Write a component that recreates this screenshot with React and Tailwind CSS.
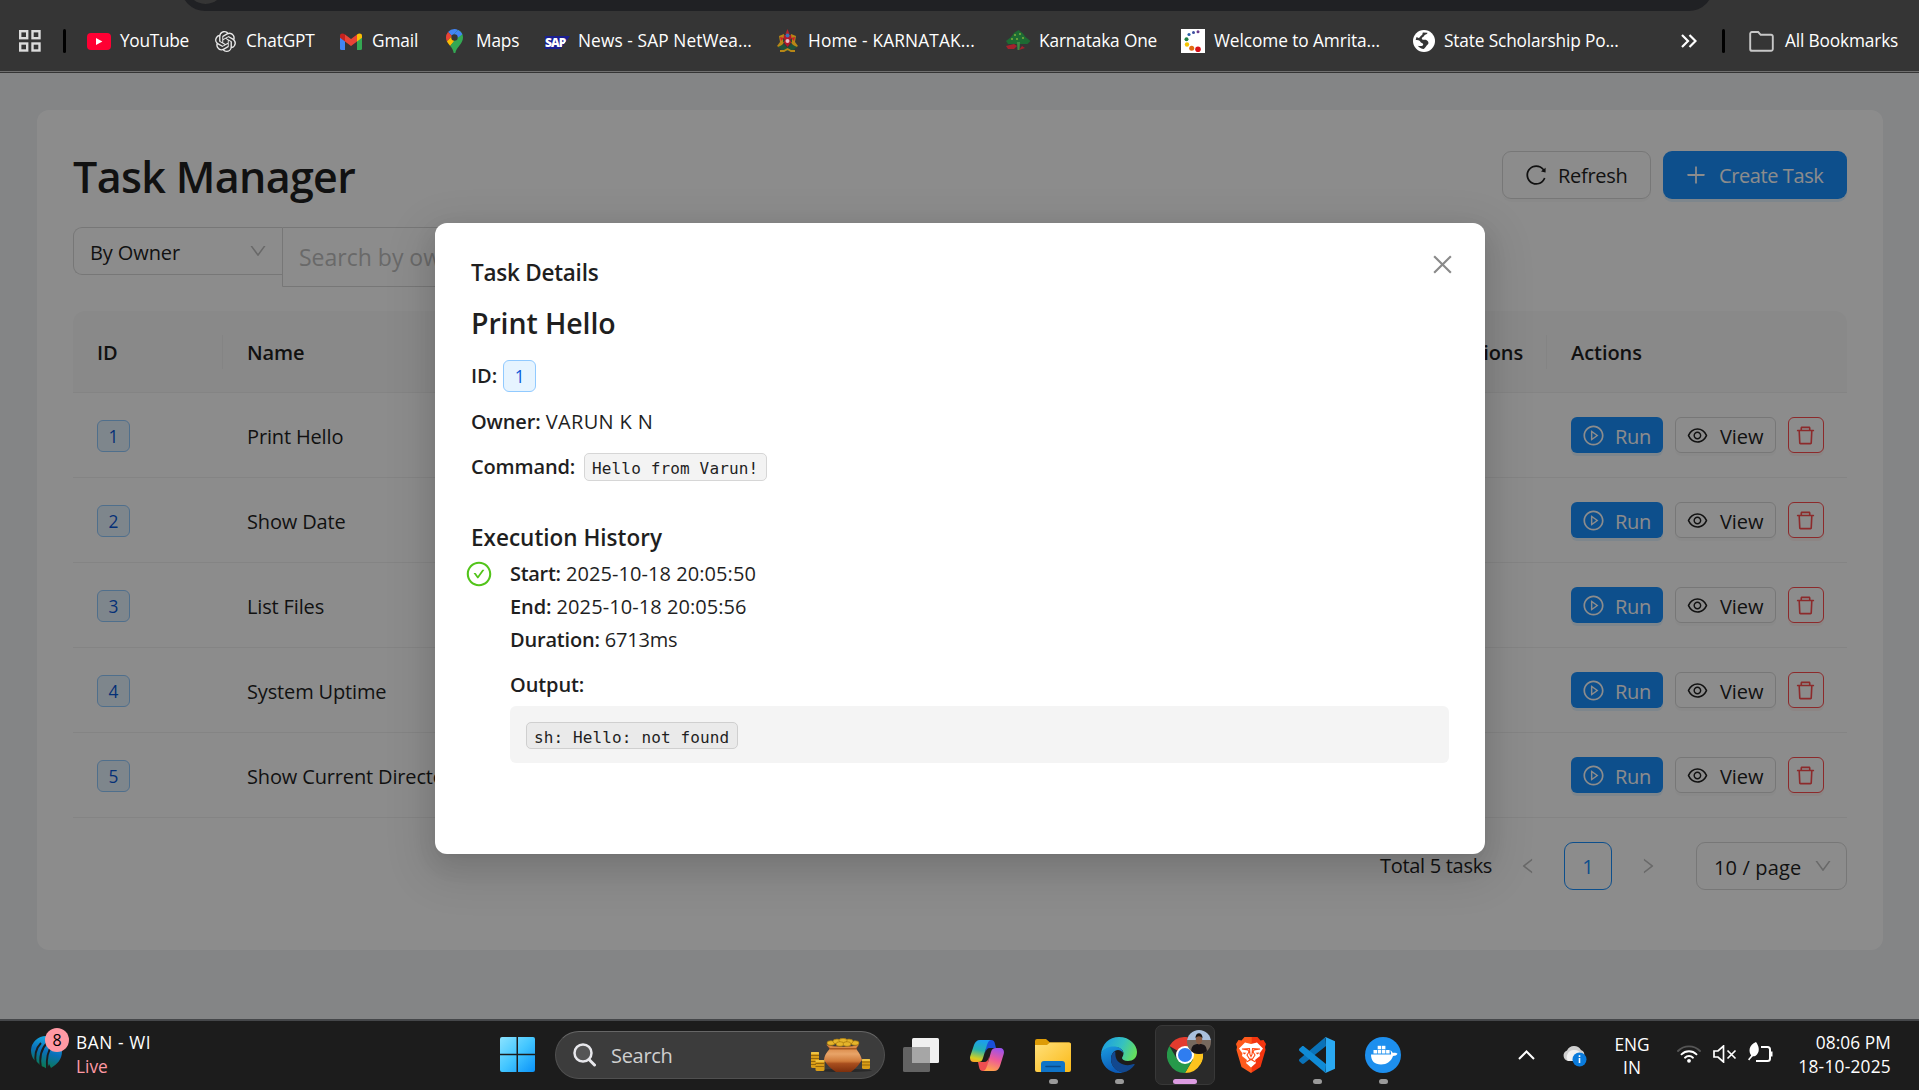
import {
  AiOutlineReload,
  AiOutlinePlus,
  AiOutlineDown,
  AiOutlineLeft,
  AiOutlineRight,
  AiOutlinePlayCircle,
  AiOutlineEye,
  AiOutlineDelete,
  AiOutlineClose,
  AiOutlineCheckCircle,
} from "react-icons/ai";
import { SiOpenai } from "react-icons/si";

/* ---------- bookmark icons ---------- */

const YouTubeIcon = () => (
  <svg width="24" height="17" viewBox="0 0 24 17">
    <rect width="24" height="17" rx="4" fill="#ff0033" />
    <path d="M9 5v7l6.400-3.500z" fill="#fff" />
  </svg>
);
const GmailIcon = () => (
  <svg width="22" height="17" viewBox="0 0 22 17">
    <path d="M0 3v12.500A1.500 1.500 0 0 0 1.500 17H5V7z" fill="#4285f4" />
    <path d="M22 3v12.500a1.500 1.500 0 0 1-1.500 1.500H17V7z" fill="#34a853" />
    <path d="M5 1.500v7L11 13l6-4.500v-7L11 6z" fill="#ea4335" />
    <path d="M0 2.500v2.200L5 8.500v-7C3-.3 0 .2 0 2.500z" fill="#c5221f" />
    <path d="M22 2.500v2.200L17 8.500v-7c2-1.800 5-1.300 5 1z" fill="#fbbc04" />
  </svg>
);
const MapsIcon = () => (
  <svg width="17" height="24" viewBox="0 0 17 24">
    <path d="M8.500 0A8.500 8.500 0 0 0 2 3l4 4 6-6A8 8 0 0 0 8.500 0z" fill="#4285f4" />
    <path d="M2 3a8.500 8.500 0 0 0-2 5.500c0 1.500.3 2.700.9 3.900L6 7z" fill="#ea4335" />
    <path d="M6 7 .9 12.400C1.700 14 3 15.400 4.200 17L12 8z" fill="#fbbc04" />
    <path d="M12 1 6 7l2 5-3.800 5C6 19.200 7.200 21 7.700 24h1.600c1-6 7.700-9 7.700-15.500C17 5 15 2 12 1z" fill="#34a853" />
    <path d="M12 1 7 6l3 4 6.400-4.800A8.500 8.500 0 0 0 12 1z" fill="#4285f4" />
    <circle cx="8.500" cy="8.500" r="3.200" fill="#353535" />
  </svg>
);
const SapIcon = () => (
  <span className="ml-px mt-[3px] flex h-[13px] w-[25px] items-center bg-[#1b1f92] [clip-path:polygon(0_0,100%_0,62%_100%,0_100%)]">
    <span className="text-[12px] font-extrabold leading-none tracking-[-1px] text-white">SAP</span>
  </span>
);
const EmblemIcon = () => (
  <svg width="23" height="24" viewBox="0 0 23 24">
    <path d="M11.500 0l2 5h-4z" fill="#b3202a" />
    <path d="M3 7l5-2 1 7-5 7-3-2 3-4zM20 7l-5-2-1 7 5 7 3-2-3-4z" fill="#b88716" />
    <path d="M4 8l4 1-3 3zM19 8l-4 1 3 3z" fill="#c8202a" />
    <path d="M8 6h7l1 6-4.500 6L7 12z" fill="#b2182b" />
    <path d="M7 9l2 2-2 3zM16 9l-2 2 2 3z" fill="#2b4a30" />
    <circle cx="11.500" cy="6.500" r="2" fill="#3d6fb0" />
    <circle cx="11.500" cy="12" r="2" fill="#e5c3ca" />
    <path d="M2 18l6-3 3.500 4 3.500-4 6 3-5 4H7z" fill="#20523a" />
    <path d="M4 22h4l3.500-2 3.500 2h4" stroke="#b88716" strokeWidth="1.800" fill="none" />
  </svg>
);
const TreeIcon = () => (
  <svg width="25" height="22" viewBox="0 0 25 22">
    <path d="M12.500 0l4 3 3 4 5 4-3 3H2l-2-3 5-4 3-4z" fill="#1d6b33" />
    <path d="M11 12h3l-.5 8h-2z" fill="#3d8b45" />
    <path d="M0 16l8-2 3 2-3 3-6 0z" fill="#a3222c" />
    <path d="M13 20l3-4 3 2z" fill="#a3222c" />
    <g fill="#7fae3c">
      <circle cx="9" cy="5" r="1" />
      <circle cx="14" cy="4" r="1" />
      <circle cx="17" cy="8" r="1" />
      <circle cx="11" cy="9" r="1" />
      <circle cx="6" cy="9" r="1" />
    </g>
  </svg>
);
const AmritaIcon = () => (
  <svg width="24" height="24" viewBox="0 0 24 24">
    <rect width="24" height="24" fill="#fff" />
    <circle cx="17" cy="2.800" r="1.500" fill="#6c3b8c" />
    <circle cx="12.500" cy="3.500" r="1.500" fill="#3c4fa0" />
    <circle cx="8" cy="5.500" r="1.600" fill="#2a5fa8" />
    <circle cx="5.500" cy="10.300" r="2" fill="#1f7f45" />
    <circle cx="6" cy="15.500" r="2.200" fill="#f5c400" />
    <circle cx="10.700" cy="19.300" r="2.500" fill="#e06a10" />
    <circle cx="17" cy="20.300" r="2.800" fill="#d8121a" />
  </svg>
);
const GlobeIcon = () => (
  <svg width="22" height="22" viewBox="0 0 22 22">
    <circle cx="11" cy="11" r="11" fill="#fff" />
    <path d="M14.500 2.800c-.5 2.200-3 1.700-3.500 3.200-.4 1.500-2.500 1.200-2.200 2.700.4 1.500 3 .6 4.500 1.300 2 1 3 3.200 1.400 4.500-1.500 1.200-2.200 3.500-4 4.500-2.200-.3-4.500-1.500-6-3.300 2 .5 5.500.6 5.500-1.200 0-1.500-2.500-1.500-3-3C6.700 10 4.500 10.300 2.600 10c.3 0 .4-1.800 1-3l2 .9c1.800-.4 1.300-2 3-2.700 1.200-.5.7-2 1.300-2.800z" fill="#353535" />
  </svg>
);
const FolderIcon = () => (
  <svg width="25" height="21" viewBox="0 0 25 21" fill="none">
    <path d="M1.200 2.800A1.700 1.700 0 0 1 2.900 1h6.300l2.500 2.800H22a1.800 1.800 0 0 1 1.800 1.700v12.600a1.700 1.700 0 0 1-1.800 1.700H3a1.800 1.800 0 0 1-1.800-1.700z" stroke="#c7c7c7" strokeWidth="1.900" />
  </svg>
);

const bookmarks = [
  { cell: "w-[128px] tracking-[-0.3px]", icon: <YouTubeIcon />, slot: "w-[33px]", label: "YouTube" },
  { cell: "w-[125px]", icon: <SiOpenai size={21} color="#e8e8e8" />, slot: "w-[31px]", label: "ChatGPT" },
  { cell: "w-[106px]", icon: <GmailIcon />, slot: "w-[32px]", label: "Gmail" },
  { cell: "w-[98px]", icon: <MapsIcon />, slot: "w-[30px]", label: "Maps" },
  { cell: "w-[232px] tracking-[0.1px]", icon: <SapIcon />, slot: "w-[34px]", label: "News - SAP NetWea..." },
  { cell: "w-[230px] tracking-[0.15px]", icon: <EmblemIcon />, slot: "w-[32px]", label: "Home - KARNATAK..." },
  { cell: "w-[175px]", icon: <TreeIcon />, slot: "w-[33px]", label: "Karnataka One" },
  { cell: "w-[232px] tracking-[-0.09px]", icon: <AmritaIcon />, slot: "w-[33px]", label: "Welcome to Amrita..." },
  { cell: "w-[268px]", icon: <GlobeIcon />, slot: "w-[31px]", label: "State Scholarship Po..." },
];

function BrowserBar() {
  return (
    <header className="relative h-[73px] overflow-hidden border-b border-[#353535] bg-[#353535]">
      <div className="flex h-[72px] items-center border-b border-[#707070] pl-[19px] pt-[11px] text-[17.3px] tracking-[-0.15px] text-white">
        <svg width="22" height="22" viewBox="0 0 22 22" fill="none" stroke="#dcdcdc" strokeWidth="2.400">
          <rect x="1.200" y="1.200" width="7" height="7" />
          <rect x="13.500" y="1.200" width="7" height="7" />
          <rect x="1.200" y="13.500" width="7" height="7" />
          <rect x="13.500" y="13.500" width="7" height="7" />
        </svg>
        <div className="ml-[22px] mr-[21px] h-6 w-[3px] rounded bg-black" />
        {bookmarks.map((b) => (
          <div key={b.label} className={`flex shrink-0 items-center ${b.cell}`}>
            <span className={`flex shrink-0 ${b.slot}`}>{b.icon}</span>
            <span className="whitespace-nowrap">{b.label}</span>
          </div>
        ))}
        <svg width="16" height="14" viewBox="0 0 16 14" fill="none" stroke="#fff" strokeWidth="2.200">
          <path d="M1 1l6 6-6 6M8.500 1l6 6-6 6" />
        </svg>
        <div className="ml-[25px] mr-6 h-6 w-[3px] rounded bg-black" />
        <FolderIcon />
        <span className="ml-[11px] whitespace-nowrap">All Bookmarks</span>
      </div>
      <div className="absolute left-[181px] top-[-37px] h-[48px] w-[1532px] overflow-hidden rounded-full bg-[#202124]">
        <div className="absolute left-[6px] top-[4px] h-[37px] w-[37px] rounded-full bg-[#353535]" />
      </div>
    </header>
  );
}

/* ---------- task manager page ---------- */

const Tag = ({ children }) => (
  <span className="flex h-8 w-[33px] items-center justify-center rounded-[6px] border-[1.5px] border-[#91caff] bg-[#e6f4ff] pt-px text-[17.3px] text-[#0958d9]">
    {children}
  </span>
);

const tasks = ["Print Hello", "Show Date", "List Files", "System Uptime", "Show Current Directory"];

function TaskRow({ id, name }) {
  return (
    <div className="flex h-[85px] items-center border-b border-[#f0f0f0] pl-6">
      <div className="w-[150px] pt-[2px]">
        <Tag>{id}</Tag>
      </div>
      <div className="w-[1324px] pt-[3px] tracking-[-0.15px]">{name}</div>
      <div className="flex gap-3 tracking-[-0.3px]">
        <button className="flex h-9 w-[92px] items-center rounded-[6px] bg-[#1890ff] pl-[11px] text-white shadow-[0_3px_0_rgba(5,145,255,0.1)]">
          <AiOutlinePlayCircle size={23} />
          <span className="ml-[10px] pt-[3px]">Run</span>
        </button>
        <button className="flex h-9 w-[101px] items-center rounded-[6px] border border-[#d9d9d9] bg-white pl-[10px] shadow-[0_3px_0_rgba(0,0,0,0.02)]">
          <AiOutlineEye size={23} />
          <span className="ml-[11px] pt-[3px] tracking-[-0.1px]">View</span>
        </button>
        <button className="flex h-9 w-9 items-center justify-center rounded-[6px] border border-[#ff4d4f] bg-white pr-px text-[#ff4d4f] shadow-[0_3px_0_rgba(255,38,5,0.06)]">
          <AiOutlineDelete size={23} />
        </button>
      </div>
    </div>
  );
}

function TaskPage() {
  return (
    <main className="h-full bg-[#f0f2f5] px-[37px] pt-[37px] text-[20px] text-[#1f1f1f]">
      <section className="h-[840px] w-[1846px] rounded-[12px] bg-white px-9 pt-[34px]">
        <div className="flex h-[66px] items-center justify-between">
          <h1 className="text-[43px] font-semibold leading-[66px] tracking-[-0.65px]">Task Manager</h1>
          <div className="mt-[-4px] flex gap-3 tracking-[-0.3px]">
            <button className="flex h-12 w-[149px] items-center rounded-[9px] border border-[#d9d9d9] pl-[21px] shadow-[0_3px_0_rgba(0,0,0,0.02)]">
              <AiOutlineReload size={24} />
              <span className="ml-[10px] pt-[2px]">Refresh</span>
            </button>
            <button className="flex h-12 w-[184px] items-center rounded-[9px] bg-[#1890ff] pl-[21px] text-white shadow-[0_3px_0_rgba(5,145,255,0.1)]">
              <AiOutlinePlus size={24} />
              <span className="ml-[11px] whitespace-nowrap pt-[2px] tracking-[-0.4px]">Create Task</span>
            </button>
          </div>
        </div>

        <div className="mt-[17px] flex h-[60px] items-start">
          <div className="flex h-12 w-[209px] items-center justify-between rounded-l-[9px] border border-r-0 border-[#d9d9d9] pl-4 pr-[14px]">
            <span className="pt-[3px] tracking-[-0.1px]">By Owner</span>
            <AiOutlineDown size={20} color="#bfbfbf" />
          </div>
          <div className="flex h-[60px] w-[600px] items-center rounded-r-[12px] border border-[#d9d9d9] pl-4 pt-px text-[23px] text-[#bfbfbf]">
            Search by owner
          </div>
        </div>

        <div className="mt-6 flex h-[82px] items-center rounded-t-[12px] border-b border-[#f0f0f0] bg-[#fafafa] pl-6 text-[20px] font-semibold tracking-[-0.15px]">
          <div className="flex h-[34px] w-[126px] items-center border-r border-[#f0f0f0] pt-[2px]">ID</div>
          <div className="ml-6 w-[1090px] pt-[2px]">Name</div>
          <div className="flex h-[34px] w-[210px] items-center justify-end border-r border-[#f0f0f0] pr-[23px] pt-[2px]">Executions</div>
          <div className="ml-6 pt-[2px] tracking-[-0.05px]">Actions</div>
        </div>
        {tasks.map((name, i) => (
          <TaskRow key={name} id={i + 1} name={name} />
        ))}

        <div className="mt-6 flex h-12 items-center justify-end">
          <span className="w-[114px] whitespace-nowrap tracking-[-0.3px]">Total 5 tasks</span>
          <span className="ml-[24px] w-5">
            <AiOutlineLeft size={20} color="#bfbfbf" />
          </span>
          <span className="ml-[26px] flex h-12 w-12 items-center justify-center rounded-[9px] border-[1.5px] border-[#1890ff] pt-px text-[#1890ff]">1</span>
          <span className="ml-[26px] w-5">
            <AiOutlineRight size={20} color="#bfbfbf" />
          </span>
          <span className="ml-[38px] flex h-12 w-[151px] items-center justify-between rounded-[9px] border border-[#d9d9d9] pl-[17px] pr-[13px]">
            <span className="whitespace-nowrap pt-[3px] tracking-[0.15px]">10 / page</span>
            <AiOutlineDown size={20} color="#bfbfbf" />
          </span>
        </div>
      </section>
    </main>
  );
}

function TaskDetails() {
  return (
    <div className="absolute left-[435px] top-[150px] h-[631px] w-[1050px] rounded-[12px] bg-white px-9 pt-[30px] text-[20px] text-[#1f1f1f] shadow-[0_9px_24px_rgba(0,0,0,0.08),0_4px_9px_-6px_rgba(0,0,0,0.12),0_14px_42px_12px_rgba(0,0,0,0.1)]">
      <AiOutlineClose size={27} color="#8a8a8a" className="absolute right-[29px] top-[28px]" />
      <h2 className="text-[22.500px] font-semibold leading-[40px] tracking-[-0.25px]">Task Details</h2>
      <h3 className="mt-[8px] text-[28.500px] font-semibold leading-[44px] tracking-[-0.1px]">Print Hello</h3>
      <div className="mt-[15px] flex h-8 items-center gap-[6px]">
        <b className="font-semibold">ID:</b>
        <Tag>1</Tag>
      </div>
      <div className="mt-[13px] h-[33px] leading-[33px]">
        <b className="font-semibold tracking-[-0.15px]">Owner:</b> <span className="tracking-[0.35px]">VARUN K N</span>
      </div>
      <div className="mt-[12px] flex h-[33px] items-center">
        <b className="w-[113px] font-semibold tracking-[-0.15px]">Command:</b>
        <code className="mt-px flex h-7 items-center whitespace-pre rounded-[5px] border border-[#d6d6d6] bg-[#f3f3f3] pl-[7px] pr-2 pt-[3px] font-['DejaVu_Sans_Mono',monospace] text-[16px] tracking-[0.15px]">
          Hello from Varun!
        </code>
      </div>
      <h4 className="mt-[37px] text-[22.500px] font-semibold leading-[36px]">Execution History</h4>
      <div className="flex">
        <span className="ml-[-6px] mt-[4px] w-[45px]">
          <AiOutlineCheckCircle size={28} color="#52c41a" />
        </span>
        <div className="flex-1 pt-px leading-[33px]">
          <div>
            <b className="font-semibold tracking-[-0.3px]">Start:</b> <span className="tracking-[0.07px]">2025-10-18 20:05:50</span>
          </div>
          <div>
            <b className="font-semibold tracking-[-0.1px]">End:</b> <span className="tracking-[0.07px]">2025-10-18 20:05:56</span>
          </div>
          <div className="tracking-[-0.2px]">
            <b className="font-semibold">Duration:</b> 6713ms
          </div>
          <div className="mt-3">
            <b className="font-semibold tracking-[-0.1px]">Output:</b>
          </div>
          <div className="mt-[5px] flex h-[57px] items-center rounded-[6px] bg-[#f4f4f4] pl-4">
            <code className="mt-[2px] flex h-[27px] items-center whitespace-pre rounded-[5px] border border-[#cfcfcf] bg-[#eaeaea] pl-[7px] pr-2 pt-[3px] font-['DejaVu_Sans_Mono',monospace] text-[16px] tracking-[0.13px]">
              sh: Hello: not found
            </code>
          </div>
        </div>
      </div>
    </div>
  );
}

/* ---------- taskbar ---------- */

const CricketIcon = () => (
  <svg width="32" height="36" viewBox="0 0 32 36">
    <defs>
      <linearGradient id="cricket" x1="0.700" y1="0" x2="0.400" y2="1">
        <stop offset="0" stopColor="#17b4ea" />
        <stop offset="0.500" stopColor="#0a6fb8" />
        <stop offset="1" stopColor="#0b7a46" />
      </linearGradient>
    </defs>
    <path d="M15 1a15 15 0 0 1 16 15c0 9-5 13-11 17l-2-4-2 5-3-2-3-1-4-4C2 25 0 20 0 15A15 15 0 0 1 15 1z" fill="url(#cricket)" />
    <path d="M10 8C5 13 3 20 5 30M16 8c-6 6-8 14-6 25M22 9c-5 6-7 14-6 25" stroke="#1c1c1c" strokeWidth="1.900" fill="none" />
  </svg>
);

const WindowsIcon = () => (
  <svg width="35" height="35" viewBox="0 0 35 35">
    <defs>
      <linearGradient id="win" x1="0" y1="0" x2="1" y2="1">
        <stop offset="0" stopColor="#8be3ff" />
        <stop offset="0.500" stopColor="#43c6ff" />
        <stop offset="1" stopColor="#0a92f8" />
      </linearGradient>
    </defs>
    <path d="M2 0h14.500v16.700H0V2a2 2 0 0 1 2-2zM18 0h15a2 2 0 0 1 2 2v14.700H18zM0 18.200h16.500V35H2a2 2 0 0 1-2-2zM18 18.200h17V33a2 2 0 0 1-2 2H18z" fill="url(#win)" />
  </svg>
);

const PotIcon = () => (
  <svg width="62" height="34" viewBox="0 0 62 34">
    <defs>
      <linearGradient id="pot" x1="0" y1="0" x2="0" y2="1">
        <stop offset="0" stopColor="#d98a48" />
        <stop offset="0.250" stopColor="#e8a468" />
        <stop offset="0.550" stopColor="#cf7a3a" />
        <stop offset="0.650" stopColor="#a84e1e" />
        <stop offset="1" stopColor="#7d2f0c" />
      </linearGradient>
    </defs>
    <ellipse cx="33" cy="32.500" rx="28" ry="1.500" fill="#292929" />
    <path d="M19 10h26c0 2 4 4 6 12-4 6-7 9-11 12H25c-5-3-9-7-12-12 1-8 6-10 6-12z" fill="url(#pot)" />
    <path d="M15 6c4 4 29 4 33 0l-3 5.500H19z" fill="#a9561f" />
    <path d="M15 6.500l4 3.500h26l3-3.500c-4 3-29 3-33 0z" fill="#d98a48" />
    <g fill="#e5b52c" stroke="#a8780e" strokeWidth="0.700">
      <ellipse cx="20" cy="5" rx="4" ry="2.300" />
      <ellipse cx="44" cy="5" rx="4" ry="2.300" />
      <ellipse cx="26" cy="3.500" rx="4" ry="2.400" />
      <ellipse cx="38" cy="3.500" rx="4" ry="2.400" />
      <ellipse cx="32" cy="2.600" rx="4" ry="2.300" />
      <ellipse cx="29" cy="6" rx="4" ry="2.300" />
      <ellipse cx="36" cy="6" rx="4" ry="2.300" />
    </g>
    <g fill="#d99d17">
      <rect x="0" y="14" width="8" height="16" rx="1.500" />
      <rect x="4.500" y="22" width="9" height="11" rx="1.500" />
      <rect x="51" y="21" width="8" height="10" rx="1.500" />
    </g>
    <path d="M0 17.500h8M0 20.500h8M0 23.500h5M0 26.500h5M4.500 25.500h9M4.500 28.500h9M51 24h8M51 27h8" stroke="#8f620a" strokeWidth="0.900" />
    <path d="M0 15h8M4.500 23h9M51 22h8" stroke="#f6cf52" strokeWidth="1.600" />
  </svg>
);

const TaskViewIcon = () => (
  <svg width="36" height="34" viewBox="0 0 36 34">
    <rect x="9" y="0" width="27" height="25" rx="1.500" fill="#f0f0f0" />
    <rect x="0" y="9" width="27" height="25" rx="1.500" fill="#636363" />
    <rect x="9" y="9" width="18" height="16" fill="#a6a6a6" />
  </svg>
);

const CopilotIcon = () => (
  <svg width="34" height="31" viewBox="0 0 34 31">
    <defs>
      <linearGradient id="cpA" x1="0.500" y1="0" x2="0.300" y2="1">
        <stop offset="0" stopColor="#1c9df0" />
        <stop offset="0.450" stopColor="#25b2b0" />
        <stop offset="0.850" stopColor="#d5cf20" />
        <stop offset="1" stopColor="#f6a726" />
      </linearGradient>
      <linearGradient id="cpB" x1="0.700" y1="0" x2="0.400" y2="1">
        <stop offset="0" stopColor="#9a52ee" />
        <stop offset="0.500" stopColor="#ee5a98" />
        <stop offset="1" stopColor="#ffa24c" />
      </linearGradient>
    </defs>
    <path d="M17 0h4c2.500 0 3.500 1.500 4 4l1 4h-6c-3 0-4 2-5 5z" fill="#1a50d8" />
    <path d="M17 31h-4c-2.500 0-3.500-1.500-4-4l-1-5h6c3 0 4-2 5-5z" fill="#ef4e50" />
    <path d="M10 0h11c-2 .5-3 2-4 5l-4 13c-1 3-2 4-5 4H4c-3.500 0-4.500-3-3.700-6L4 5c1-3 3-5 6-5z" fill="url(#cpA)" />
    <path d="M24 31H13c2-.5 3-2 4-5l4-14c1-3 2-4 5-4h4c3.500 0 4.500 3 3.700 6L30 26c-1 3-3 5-6 5z" fill="url(#cpB)" />
  </svg>
);

const ExplorerIcon = () => (
  <svg width="36" height="33" viewBox="0 0 36 33">
    <defs>
      <linearGradient id="fold" x1="0" y1="0" x2="1" y2="1">
        <stop offset="0" stopColor="#ffe07a" />
        <stop offset="1" stopColor="#fbb917" />
      </linearGradient>
    </defs>
    <path d="M0 2A2 2 0 0 1 2 0h9l4 3.500h19a2 2 0 0 1 2 2V12H0z" fill="#dd9b06" />
    <path d="M0 6h12l3-2.500h19a2 2 0 0 1 2 2V31a2 2 0 0 1-2 2H2a2 2 0 0 1-2-2z" fill="url(#fold)" />
    <path d="M6 33v-8a3 3 0 0 1 3-3h18a3 3 0 0 1 3 3v8z" fill="#0f74c8" />
    <path d="M11 27.500h14" stroke="#0a4a88" strokeWidth="1.600" strokeLinecap="round" />
  </svg>
);

const EdgeIcon = () => (
  <svg width="36" height="36" viewBox="0 0 36 36">
    <defs>
      <linearGradient id="edgeA" x1="0" y1="0.300" x2="1" y2="0.600">
        <stop offset="0" stopColor="#1b9de2" />
        <stop offset="0.550" stopColor="#35c1c0" />
        <stop offset="1" stopColor="#66e05a" />
      </linearGradient>
      <linearGradient id="edgeB" x1="0" y1="0" x2="0.300" y2="1">
        <stop offset="0" stopColor="#1a9be0" />
        <stop offset="1" stopColor="#0c5cb8" />
      </linearGradient>
    </defs>
    <path d="M0 17C1 7 8 0 18 0c11 0 18 8 18 15 0 6-4 9-9 9-4 0-6-1.500-6-3 0-1 1.500-2 1.500-5 0-3-4-6-9-6C8 10 3 12 0 17z" fill="url(#edgeA)" />
    <path d="M0 17c2-5 7-7.500 12.500-7.500 5.500 0 9.500 2.500 9.500 6.500-1-2-3-3-5-3-4 0-7 4-7 9 0 7 5 12 12 13.500-2 .4-3 .5-4 .5C8 36 0 28 0 18z" fill="url(#edgeB)" />
    <path d="M14 14c-3 2-4 5-4 8 0 7 5 12.500 12 13.500 5-1 9-4 11.500-7.500.5-1-.3-1.300-1-1-7 3-17 0-18-8-.2-2 0-4-.5-5z" fill="#12488f" />
  </svg>
);

const ChromeIcon = () => (
  <svg width="36" height="36" viewBox="0 0 36 36">
    <path d="M18 18 2.400 9A18 18 0 0 1 33.600 9H18z" fill="#e33b2e" />
    <path d="M18 18 33.600 9A18 18 0 0 1 18 36l7.800-13.500z" fill="#fcc31e" />
    <path d="M18 18l7.800 4.500L18 36A18 18 0 0 1 2.400 9l7.800 13.500z" fill="#26994a" />
    <path d="M18 9h15.600a18 18 0 0 1-1 19L25 21z" fill="#fcc31e" />
    <circle cx="18" cy="18" r="9" fill="#fff" />
    <circle cx="18" cy="18" r="7" fill="#2f7df0" />
  </svg>
);

const AvatarIcon = () => (
  <svg width="24" height="24" viewBox="0 0 24 24">
    <defs>
      <clipPath id="face">
        <circle cx="12" cy="12" r="12" />
      </clipPath>
    </defs>
    <g clipPath="url(#face)">
      <rect width="24" height="12" fill="#a9c0de" />
      <rect y="10" width="24" height="14" fill="#77685e" />
      <path d="M4 24c0-8 2-10 8-10s8 2 8 10z" fill="#191418" />
      <ellipse cx="12" cy="9.500" rx="3.200" ry="5" fill="#8a5c46" />
      <path d="M8.500 8.500c-.5-7 7.500-7 7 0-1.500-3-5.500-3-7 0z" fill="#17120f" />
    </g>
  </svg>
);

const BraveIcon = () => (
  <svg width="30" height="36" viewBox="0 0 30 36">
    <defs>
      <linearGradient id="brave" x1="0" y1="0" x2="1" y2="0">
        <stop offset="0.500" stopColor="#ff5a1c" />
        <stop offset="0.550" stopColor="#f4350f" />
      </linearGradient>
    </defs>
    <path d="M8.500 0h13l3 3.500 3-.5L30 7l-1 3 .5 3-5 17-9.500 6-9.500-6-5-17L1 10 0 7l2.500-4 3 .5z" fill="url(#brave)" />
    <path d="M9 5.500 15 7l6-1.500 6 6-3.500 5 .5 2.500-5 4 1 3-5 4.500-5-4.500 1-3-5-4 .5-2.500-3.500-5z" fill="#fff" />
    <path d="M6 12l6 1 1 2-2 3 2.500 4h3l2.500-4-2-3 1-2 6-1-7.500-.5-.5 6-1 2-1-2-.5-6zM10.500 25l4.500-2.500 4.500 2.500" stroke="#ff4a15" strokeWidth="1.100" fill="none" />
    <path d="M6.500 15.500l4 .3-2.200 1.700zM23.500 15.500l-4 .3 2.200 1.700z" fill="#ff4a15" />
  </svg>
);

const CodeIcon = () => (
  <svg width="36" height="36" viewBox="0 0 36 36">
    <path d="M26.500 0 27 9 5 26.500c-.7.600-1.600.5-2.200 0L.6 24.500c-.8-.7-.8-1.800 0-2.500z" fill="#0a72b8" />
    <path d="M26.500 36 27 27 5 9.500c-.7-.6-1.600-.5-2.200 0L.6 11.500c-.8.7-.8 1.800 0 2.500z" fill="#108bd6" />
    <path d="M26.500 0 36 4.300v27.400L26.500 36c-.6-.4 .5-.8 .5-2V2c0-1.200-1.100-1.600-.5-2z" fill="#2aa9f2" />
  </svg>
);

const DockerIcon = () => (
  <svg width="36" height="36" viewBox="0 0 36 36">
    <circle cx="18" cy="18" r="18" fill="#1d8fee" />
    <path d="M6 17.500h20c.2-1.500 0-2.500-.8-4 1.300.3 2.200 1.300 2.600 2.500 1.500-.3 3.500-.2 4.700.8-.7 1.500-2.500 2.200-4.500 2.200C26 24.500 22 27.500 16 27.500c-6.500 0-10-3.500-10-10z" fill="#fff" />
    <g fill="#fff">
      <rect x="8.500" y="13" width="3.500" height="3.500" />
      <rect x="12.700" y="13" width="3.500" height="3.500" />
      <rect x="16.900" y="13" width="3.500" height="3.500" />
      <rect x="21.100" y="13" width="3.500" height="3.500" />
      <rect x="12.700" y="8.800" width="3.500" height="3.500" />
      <rect x="16.900" y="8.800" width="3.500" height="3.500" />
    </g>
  </svg>
);

const apps = [
  { id: "view", icon: <TaskViewIcon />, dot: false },
  { id: "copilot", icon: <CopilotIcon />, dot: false },
  { id: "files", icon: <ExplorerIcon />, dot: true },
  { id: "edge", icon: <EdgeIcon />, dot: true },
  { id: "chrome", icon: <ChromeIcon />, dot: false, active: true },
  { id: "brave", icon: <BraveIcon />, dot: false },
  { id: "code", icon: <CodeIcon />, dot: true },
  { id: "docker", icon: <DockerIcon />, dot: true },
];

function AppSlot({ app }) {
  return (
    <div className="flex w-[66px] justify-center">
      <div
        className={
          app.active
            ? "relative flex h-[60px] w-[60px] items-center justify-center rounded-[7px] border border-[#383838] bg-[#2a2a2a]"
            : "relative flex h-[60px] w-[60px] items-center justify-center"
        }
      >
        {app.icon}
        {app.active && (
          <span className="absolute left-[31px] top-[4px]">
            <AvatarIcon />
          </span>
        )}
        {app.active && <span className="absolute bottom-0 left-[17px] h-[5px] w-6 rounded-full bg-[#dc9ce2]" />}
        {app.dot && <span className="absolute bottom-[1px] left-[26px] h-[5px] w-[9px] rounded-full bg-[#9a9a9a]" />}
      </div>
    </div>
  );
}

function Taskbar() {
  return (
    <footer className="flex h-[71px] border-t-2 border-[#45474a] bg-[#1c1c1c] pb-[3px] pl-[31px] text-[17.3px] text-white">
      <div className="relative w-[45px] pt-[14px]">
        <CricketIcon />
        <span className="absolute left-[14px] top-[7px] flex h-6 w-6 items-center justify-center rounded-full bg-[#ff99a4] text-[16px] text-black">8</span>
      </div>
      <div className="w-[424px] pt-[10px] leading-6">
        <div className="tracking-[0.6px]">BAN - WI</div>
        <div className="text-[#ff99a4]">Live</div>
      </div>
      <div className="flex w-[55px] items-center">
        <WindowsIcon />
      </div>
      <div className="mt-[10px] flex h-12 w-[330px] items-center rounded-full border border-[#505050] border-t-[#666] bg-[#3c3c3c] pl-[17px]">
        <svg width="23" height="24" viewBox="0 0 23 24" fill="none" stroke="#e8e8ec" strokeWidth="2.500">
          <circle cx="10" cy="10" r="8.500" fill="#555" />
          <path d="M16 16.500l5.500 5.500" strokeWidth="3" strokeLinecap="round" />
        </svg>
        <span className="ml-[15px] w-[200px] pt-px text-[20px] tracking-[-0.3px] text-[#cfcfcf]">Search</span>
        <PotIcon />
      </div>
      <div className="ml-[3px] mt-[4px] flex h-[60px]">
        {apps.map((app) => (
          <AppSlot key={app.id} app={app} />
        ))}
      </div>

      <div className="ml-[102px] flex items-center">
        <svg className="mt-px" width="17" height="10" viewBox="0 0 17 10" fill="none" stroke="#fff" strokeWidth="2">
          <path d="M1 9l7.500-7.500L16 9" />
        </svg>
        <svg className="ml-[27px] mt-1" width="25" height="22" viewBox="0 0 25 22">
          <path d="M6 16a5.500 5.500 0 0 1-1-10.500A8 8 0 0 1 19 5a5 5 0 0 1 3 6l-5 5z" fill="#cfcfcf" />
          <path d="M6 16a7 7 0 0 1 6-11c4 0 7 2 9 5l-4 6z" fill="#f0f0f0" />
          <circle cx="17.500" cy="14.500" r="7" fill="#0a7bdc" />
          <path d="M17.500 13v5M17.500 10.300v1.700" stroke="#fff" strokeWidth="1.600" />
        </svg>
        <div className="ml-[26px] mt-[3px] w-[38px] text-center leading-[23px]">
          <div>ENG</div>
          <div>IN</div>
        </div>
        <svg className="ml-[26px]" width="24" height="18" viewBox="0 0 24 18" fill="none" strokeWidth="1.900" strokeLinecap="round">
          <path d="M1 6a15.500 15.500 0 0 1 22 0" stroke="#555" />
          <path d="M4.500 9.300a10.600 10.600 0 0 1 15 0M8 12.700a5.700 5.700 0 0 1 8 0" stroke="#fff" />
          <circle cx="12" cy="15.800" r="1.900" fill="#fff" />
        </svg>
        <svg className="ml-3" width="24" height="18" viewBox="0 0 24 18" fill="none" stroke="#fff" strokeWidth="1.700">
          <path d="M1 6h4l5.500-5v16L5 12H1zM14.500 5.500l8 8M22.500 5.500l-8 8" />
        </svg>
        <svg className="mb-[4px] ml-[11px]" width="25" height="21" viewBox="0 0 25 21" fill="none">
          <path d="M13 5h6.500A2.500 2.500 0 0 1 22 7.500v9a2.500 2.500 0 0 1-2.500 2.500H8M23.500 9.500v5" stroke="#fff" strokeWidth="2" />
          <path d="M8 0c3 4 4 9 1 12.500-1.500 2-4 2-5.500 1.500C0 9 1 3 8 0z" fill="#fff" />
          <path d="M.7 18c1.500-2 3-3.500 4.500-6" stroke="#fff" strokeWidth="1.600" />
        </svg>
        <div className="ml-[17px] mt-[2px] w-[101px] whitespace-nowrap text-right leading-6">
          <div className="tracking-[0.1px]">08:06 PM</div>
          <div className="tracking-[0.25px]">18-10-2025</div>
        </div>
      </div>
    </footer>
  );
}

export default function App() {
  return (
    <div className="h-[1090px] w-[1919px] overflow-hidden bg-[#1c1c1c] font-['Open_Sans','Noto_Sans',sans-serif]">
      <BrowserBar />
      <div className="relative h-[946px] overflow-hidden">
        <TaskPage />
        <div className="absolute inset-0 bg-black/45" />
        <TaskDetails />
      </div>
      <Taskbar />
    </div>
  );
}
